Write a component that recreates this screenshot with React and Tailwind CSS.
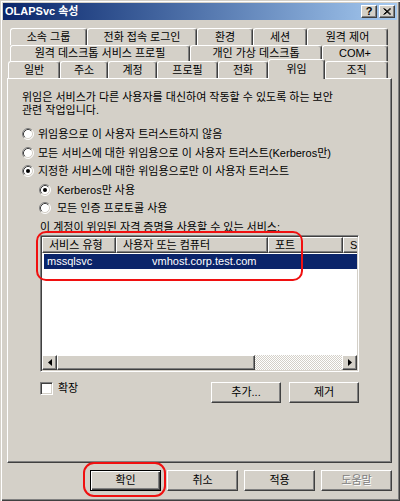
const raised = 'border border-t-white border-l-white border-r-[#404040] border-b-[#404040] shadow-[inset_-1px_-1px_0_#808080]'
const sunken = 'border border-t-[#808080] border-l-[#808080] border-r-white border-b-white shadow-[inset_1px_1px_0_#404040,inset_-1px_-1px_0_#d4d0c8]'

function Radio({ checked }) {
  return (
    <svg width="12" height="12" viewBox="0 0 12 12" className="shrink-0">
      <circle cx="6" cy="6" r="5" fill="#fff" />
      <path d="M2.11 9.89 A5.5 5.5 0 0 1 9.89 2.11" fill="none" stroke="#808080" />
      <path d="M9.89 2.11 A5.5 5.5 0 0 1 2.11 9.89" fill="none" stroke="#fff" />
      <path d="M2.82 9.18 A4.5 4.5 0 0 1 9.18 2.82" fill="none" stroke="#404040" />
      <path d="M9.18 2.82 A4.5 4.5 0 0 1 2.82 9.18" fill="none" stroke="#d4d0c8" />
      {checked && <circle cx="6" cy="6" r="2" fill="#000" />}
    </svg>
  )
}

function RadioRow({ checked, label, indent }) {
  return (
    <div className={`h-[18.5px] flex items-center gap-[4px] ${indent ? 'ml-[17px] gap-[6px]' : ''}`}>
      <Radio checked={checked} />
      <span>{label}</span>
    </div>
  )
}

function Tab({ w, label, selected }) {
  return (
    <div
      style={{ width: w }}
      className={`shrink-0 flex items-center justify-center border-l border-t border-white border-r border-r-[#404040] shadow-[inset_-1px_0_0_#808080] rounded-t-[3px] bg-[#d4d0c8] ${selected ? 'h-[20px] -mb-[1px] relative z-10' : 'h-full'}`}
    >
      {label}
    </div>
  )
}

function Button({ label, w = 70, primary, disabled }) {
  const base = primary
    ? 'border border-black shadow-[inset_1px_1px_0_#fff,inset_-1px_-1px_0_#404040,inset_-2px_-2px_0_#808080]'
    : raised
  return (
    <div style={{ width: w }} className={`h-[21px] shrink-0 flex items-center justify-center ${base} ${disabled ? 'text-[#808080] [text-shadow:1px_1px_0_#fff]' : ''}`}>
      {label}
    </div>
  )
}

export default function App() {
  const row1 = [['소속 그룹', 77], ['전화 접속 로그인', 110], ['환경', 56], ['세션', 54], ['원격 제어', 81]]
  const row2 = [['원격 데스크톱 서비스 프로필', 180], ['개인 가상 데스크톱', 132], ['COM+', 66]]
  const row3 = [['일반', 52], ['주소', 48], ['계정', 49], ['프로필', 61], ['전화', 50], ['위임', 57, true], ['조직', 63]]

  return (
    <div className="relative w-[400px] h-[501px] overflow-hidden bg-[#d4d0c8] p-[3px] flex flex-col text-[11px] text-black font-['Liberation_Sans','Noto_Sans_CJK_KR',sans-serif] shadow-[inset_1px_1px_0_#d4d0c8,inset_2px_2px_0_#fff,inset_-1px_-1px_0_#404040,inset_-2px_-2px_0_#808080]">
      {/* title bar */}
      <div className="h-[17px] shrink-0 flex items-center justify-between pl-[2px] pr-[2px] bg-gradient-to-r from-[#0a246a] to-[#a6caf0]">
        <span className="text-white font-bold text-[11px]">OLAPSvc 속성</span>
        <div className="flex gap-[2px]">
          <div className={`w-[16px] h-[13px] bg-[#d4d0c8] ${raised} flex items-center justify-center font-bold text-[11px] leading-none`}>?</div>
          <div className={`w-[16px] h-[13px] bg-[#d4d0c8] ${raised} flex items-center justify-center`}>
            <svg width="8" height="7" viewBox="0 0 8 7">
              <path d="M0.5 0.5 L7 6.5 M1.5 0.5 L8 6.5 M7 0.5 L0.5 6.5 M8 0.5 L1.5 6.5" stroke="#000" strokeWidth="1" />
            </svg>
          </div>
        </div>
      </div>

      {/* tabs */}
      <div className="mt-[8px] flex flex-col">
        <div className="h-[17px] ml-[7px] flex">
          {row1.map(([l, w]) => <Tab key={l} label={l} w={w} />)}
        </div>
        <div className="h-[16px] ml-[7px] flex">
          {row2.map(([l, w]) => <Tab key={l} label={l} w={w} />)}
        </div>
        <div className="h-[17px] ml-[5px] flex items-end">
          {row3.map(([l, w, s]) => <Tab key={l} label={l} w={w} selected={s} />)}
        </div>
      </div>

      {/* panel */}
      <div className="ml-[4px] w-[385px] h-[385px] shrink-0 border-l border-t border-white border-r border-b border-r-[#404040] border-b-[#404040] shadow-[inset_-1px_-1px_0_#808080] pl-[14px] pt-[12px] flex flex-col">
        <p className="leading-[13px]">
          위임은 서비스가 다른 사용자를 대신하여 작동할 수 있도록 하는 보안<br />관련 작업입니다.
        </p>
        <div className="mt-[8px] flex flex-col">
          <RadioRow label="위임용으로 이 사용자 트러스트하지 않음" />
          <RadioRow label="모든 서비스에 대한 위임용으로 이 사용자 트러스트(Kerberos만)" />
          <RadioRow checked label="지정한 서비스에 대한 위임용으로만 이 사용자 트러스트" />
          <RadioRow checked indent label="Kerberos만 사용" />
          <RadioRow indent label="모든 인증 프로토콜 사용" />
        </div>
        <div className="ml-[18px] mt-[3px] leading-[13px]">이 계정이 위임된 자격 증명을 사용할 수 있는 서비스:</div>

        {/* list view */}
        <div className={`ml-[18px] mt-[1.5px] w-[319px] h-[137px] shrink-0 bg-white ${sunken} p-[1px]`}>
          <div className="w-full h-full flex flex-col overflow-hidden">
            <div className="h-[16px] shrink-0 flex bg-[#d4d0c8]">
              {[['서비스 유형', 74], ['사용자 또는 컴퓨터', 152], ['포트', 75], ['S', 80]].map(([l, w]) => (
                <div key={l} style={{ width: w }} className="shrink-0 h-full pl-[6px] flex items-center whitespace-nowrap border-l border-t border-white border-r border-b border-r-[#404040] border-b-[#404040] shadow-[inset_-1px_-1px_0_#808080]">
                  {l}
                </div>
              ))}
            </div>
            <div className="flex-1 flex flex-col">
              <div className="mt-[1px] ml-[2px] h-[15px] flex items-center bg-[#0a246a] text-white">
                <span className="pl-[3px] w-[108px]">mssqlsvc</span>
                <span>vmhost.corp.test.com</span>
              </div>
            </div>
            <div className="h-[15px] shrink-0 flex">
              <div className={`w-[15px] h-full shrink-0 bg-[#d4d0c8] ${raised} flex items-center justify-center`}>
                <svg width="4" height="7" viewBox="0 0 4 7"><path d="M4 0 L0 3.5 L4 7 Z" fill="#000" /></svg>
              </div>
              <div className={`w-[198px] h-full shrink-0 bg-[#d4d0c8] ${raised}`} />
              <div className="flex-1 h-full bg-[repeating-conic-gradient(#fff_0_25%,#d4d0c8_0_50%)] [background-size:2px_2px]" />
              <div className={`w-[15px] h-full shrink-0 bg-[#d4d0c8] ${raised} flex items-center justify-center`}>
                <svg width="4" height="7" viewBox="0 0 4 7"><path d="M0 0 L4 3.5 L0 7 Z" fill="#000" /></svg>
              </div>
            </div>
          </div>
        </div>

        <div className="ml-[18px] mt-[10px] w-[319px] flex items-start justify-between">
          <div className="flex items-center gap-[5px] mt-[0px] h-[13px]">
            <div className={`w-[13px] h-[13px] bg-white ${sunken}`} />
            <span>확장</span>
          </div>
          <div className="flex gap-[8px]">
            <Button label="추가..." w={70} />
            <Button label="제거" w={70} />
          </div>
        </div>
      </div>

      {/* dialog buttons */}
      <div className="mt-[7px] ml-[87px] flex gap-[6px]">
        <Button primary label="확인" w={71} />
        <Button label="취소" w={71} />
        <Button label="적용" w={71} />
        <Button disabled label="도움말" w={71} />
      </div>

      {/* red highlights */}
      <div className="absolute left-[36px] top-[231px] w-[267px] h-[50px] border-2 border-[#f01010] rounded-[10px] pointer-events-none" />
      <div className="absolute left-[83px] top-[462px] w-[83px] h-[35px] border-2 border-[#f01010] rounded-[11px] pointer-events-none" />
    </div>
  )
}
